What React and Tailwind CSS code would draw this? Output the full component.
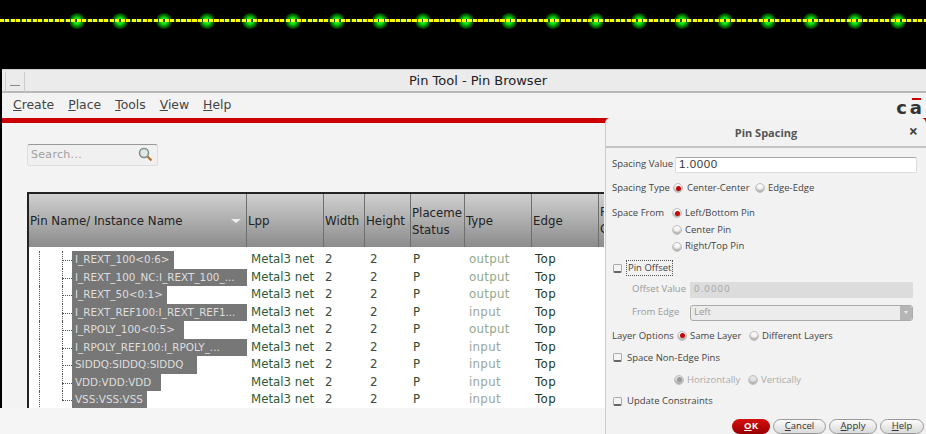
const dots = [77, 120, 164, 207, 250, 293, 337, 380, 423, 466, 509, 553, 596, 639, 682, 725, 768, 811, 855, 898];

const rows = [
  { name: "I_REXT_100<0:6>", type: "output", w: "w-[102px]" },
  { name: "I_REXT_100_NC:I_REXT_100_...", type: "output", w: "w-[175px]" },
  { name: "I_REXT_50<0:1>", type: "output", w: "w-[95px]" },
  { name: "I_REXT_REF100:I_REXT_REF1...", type: "input", w: "w-[175px]" },
  { name: "I_RPOLY_100<0:5>", type: "output", w: "w-[112px]" },
  { name: "I_RPOLY_REF100:I_RPOLY_...", type: "input", w: "w-[175px]" },
  { name: "SIDDQ:SIDDQ:SIDDQ", type: "input", w: "w-[125px]" },
  { name: "VDD:VDD:VDD", type: "input", w: "w-[89px]" },
  { name: "VSS:VSS:VSS", type: "input", w: "w-[75px]" },
];

const cols = "grid grid-cols-[218px_77px_41px_46px_54px_67px_67px_5px]";

function HeaderCell({ children, className = "" }) {
  return (
    <div className={"flex h-full items-center overflow-hidden whitespace-nowrap border-r border-[#6f6f6f] pl-[1px] pt-[2px] leading-[17px] " + className}>
      {children}
    </div>
  );
}

function Radio({ on, off }) {
  return (
    <span
      className={
        "flex h-[10px] w-[10px] shrink-0 items-center justify-center rounded-full border border-[#c0c0c0] shadow-[inset_0_-2px_2px_#aaa] " +
        (off ? "bg-[#e4e4e4]" : "bg-[#f8f8f8]")
      }
    >
      {on && <span className={"h-[5px] w-[5px] rounded-full " + (off ? "bg-[#999]" : "bg-[#c40000]")} />}
    </span>
  );
}

function Check() {
  return <span className="h-[9px] w-[9px] shrink-0 rounded-[2px] border border-[#aaa] border-b-2 border-b-[#666] bg-[#f4f4f4]" />;
}

function Btn({ children, className = "" }) {
  return (
    <button className={"flex h-[15px] items-center justify-center rounded-full border border-[#9a9a9a] bg-gradient-to-b from-[#fbfbfb] to-[#d9d9d9] text-[#333] " + className}>
      {children}
    </button>
  );
}

export default function App() {
  return (
    <div className="relative h-[434px] w-[926px] overflow-hidden bg-[#f5f5f5] font-['DejaVu_Sans',sans-serif]">
      {/* layout canvas behind the window */}
      <div className="relative h-[69px] bg-black">
        <div className="absolute bottom-0 left-[30px] right-0 top-[45px] bg-[radial-gradient(#262626_0.5px,transparent_0.6px)] bg-[size:4px_4px]" />
        {dots.map((x) => (
          <span
            key={x}
            style={{ left: x - 8 }}
            className="absolute top-[13px] h-[16px] w-[16px] rounded-full bg-[radial-gradient(circle,#33ff33_0,#11dd11_28%,#006600_55%,#002200_75%,transparent_90%)]"
          />
        ))}
        <div className="absolute left-0 right-0 top-[19px] h-[3px] bg-[repeating-linear-gradient(90deg,#ffff00_0,#ffff00_4px,#0d4f5c_4px,#0d4f5c_5.5px)]" />
      </div>

      {/* pin browser */}
      <div className="flex h-[339px] flex-col border-l-2 border-black bg-[#f3f3f3] bg-[radial-gradient(#dddddd_0.5px,transparent_0.6px)] bg-[size:2px_2px]">
        <div className="relative flex h-[24px] shrink-0 items-center justify-center border-b-2 border-[#b9b9b9] border-t border-t-[#ccc] bg-[#ebebeb] pl-[28px] pt-[1px] text-[13px] text-[#222]">
          <span className="absolute left-[3px] top-[2px] flex h-[20px] w-[20px] items-end justify-center border-x border-[#ccc] pb-[6px]">
            <span className="h-px w-[10px] bg-[#888]" />
          </span>
          <span>Pin Tool - Pin Browser</span>
        </div>

        <div className="relative flex h-[25px] shrink-0 items-center gap-[14px] pl-[11px] text-[12.4px] text-[#444]">
          <span><u>C</u>reate</span>
          <span><u>P</u>lace</span>
          <span><u>T</u>ools</span>
          <span><u>V</u>iew</span>
          <span><u>H</u>elp</span>
          <span className="absolute right-[1px] top-[3px] flex text-[18px] font-semibold leading-[24px] tracking-[3px] text-[#333]">
            c<span className="relative">a<span className="absolute left-[2px] right-[4px] top-[2px] h-[2px] bg-[#c00]" /></span>
          </span>
        </div>
        <div className="h-[5px] shrink-0 bg-[#cc0000]" />

        <div className="flex min-h-0 flex-1 flex-col pl-[25px] pr-[321px]">
          <div className="mt-[21px] flex h-[22px] w-[131px] shrink-0 items-center justify-between rounded-[3px] border border-[#ddd] border-t-[#999] bg-[#f0f0f0] pl-[3px] pr-[4px] pt-[1px] text-[11px] tracking-[0.3px] text-[#a0a0a0]">
            <span>Search...</span>
            <svg width="15" height="15" viewBox="0 0 15 15" className="-mt-[3px]">
              <circle cx="6" cy="6" r="4.5" fill="#dfe8e4" stroke="#7d8d88" strokeWidth="1.5" />
              <path d="M9.5 9.5 L13.5 13.5" stroke="#b5702a" strokeWidth="2.2" />
            </svg>
          </div>

          <div className="mt-[26px] flex min-h-0 flex-1 flex-col border-l-2 border-[#222]">
            <div className={cols + " h-[55px] w-[575px] shrink-0 items-center border-t-2 border-[#222] bg-gradient-to-b from-[#d0d0d0] to-[#8c8c8c] text-[11.8px] text-[#222]"}>
              <HeaderCell className="relative">
                <span>Pin Name/ Instance Name</span>
                <span className="absolute right-[5px] top-[25px] h-0 w-0 border-x-[5px] border-t-[4px] border-x-transparent border-t-[#eee]" />
              </HeaderCell>
              <HeaderCell>Lpp</HeaderCell>
              <HeaderCell>Width</HeaderCell>
              <HeaderCell>Height</HeaderCell>
              <HeaderCell>
                <span>Placeme<br />Status</span>
              </HeaderCell>
              <HeaderCell>Type</HeaderCell>
              <HeaderCell>Edge</HeaderCell>
              <div className="flex h-full items-center overflow-hidden pl-[1px] leading-[17px]">
                <span>F<br />C</span>
              </div>
            </div>

            <div className="min-h-0 flex-1 overflow-hidden bg-white pt-[4px] text-[11.8px] leading-[17px]">
              {rows.map((row, i) => (
                <div key={row.name} className={cols + " h-[17.5px] items-center"}>
                  <div className="relative h-full pl-[43px]">
                    <span className="absolute bottom-0 left-[10px] top-0 border-l border-dotted border-[#555]" />
                    <span className={"absolute left-[33px] top-0 border-l border-dotted border-[#555] " + (i === rows.length - 1 ? "h-[9px]" : "h-full")} />
                    <span className="absolute left-[33px] top-[9px] w-[10px] border-t border-dotted border-[#555]" />
                    <span className={"flex h-full items-center overflow-hidden whitespace-nowrap bg-[#777] pl-[3px] text-[10.4px] text-[#dedede] " + row.w}>
                      {row.name}
                    </span>
                  </div>
                  <div className="whitespace-nowrap pl-[4px] text-[#2f5a35]">Metal3 net</div>
                  <div className="pl-[1px] text-[#3e4a3e]">2</div>
                  <div className="pl-[5px] text-[#3e4a3e]">2</div>
                  <div className="pl-[2px] text-[#2f4a30]">P</div>
                  <div className={"pl-[4px] tracking-[0.3px] " + (row.type === "input" ? "text-[#9aa59a]" : "text-[#8fa98b]")}>
                    {row.type}
                  </div>
                  <div className="pl-[3px] font-medium tracking-[0.4px] text-[#243a24]">Top</div>
                  <div />
                </div>
              ))}
            </div>
          </div>
        </div>
      </div>
      <div className="h-[26px] bg-[#f5f5f5]" />

      {/* pin spacing dialog */}
      <div className="absolute left-[605px] top-[118px] flex h-[316px] w-[321px] flex-col whitespace-nowrap rounded-t-[5px] border-l border-[#ccc] bg-[#f2f2f2] font-['Open_Sans',sans-serif] text-[9.5px] text-[#444]">
        <div className="relative flex h-[30px] shrink-0 items-center justify-center border-b-2 border-[#c4c4c4] pt-[2px] text-[11px] font-bold text-[#555]">
          Pin Spacing
          <span className="absolute right-[8px] top-[6px] text-[16px] font-bold leading-[15px] text-[#444]">×</span>
        </div>

        <div className="mt-[9px] flex h-[15px] items-center pl-[6px]">
          <span className="w-[63px]">Spacing Value</span>
          <div className="flex h-[16px] w-[242px] items-center rounded-[2px] border border-[#ddd] border-t-[#aaa] bg-white pl-[3px] font-['Liberation_Sans',sans-serif] text-[11.5px] tracking-[0.6px] text-[#333]">
            1.0000
          </div>
        </div>

        <div className="mt-[9px] flex h-[15px] items-center pl-[6px]">
          <span className="w-[61px]">Spacing Type</span>
          <Radio on />
          <span className="ml-[4px] w-[68px]">Center-Center</span>
          <Radio />
          <span className="ml-[3px]">Edge-Edge</span>
        </div>

        <div className="mt-[10px] flex h-[15px] items-center pl-[6px]">
          <span className="w-[60px]">Space From</span>
          <Radio on />
          <span className="ml-[3px]">Left/Bottom Pin</span>
        </div>
        <div className="mt-[1px] flex h-[16px] items-center pl-[66px]">
          <Radio />
          <span className="ml-[3px]">Center Pin</span>
        </div>
        <div className="mt-[1px] flex h-[16px] items-center pl-[66px]">
          <Radio />
          <span className="ml-[3px]">Right/Top Pin</span>
        </div>

        <div className="mt-[6px] flex h-[15px] items-center pl-[7px]">
          <Check />
          <span className="ml-[4px] border border-dotted border-[#555] px-[1px]">Pin Offset</span>
        </div>

        <div className="mt-[6px] flex h-[16px] items-center pl-[26px] text-[#999]">
          <span className="w-[58px]">Offset Value</span>
          <div className="flex h-[16px] w-[223px] items-center border border-[#ddd] bg-[#dcdcdc] pl-[3px] tracking-[1.2px] text-[#a5a5a5]">0.0000</div>
        </div>
        <div className="mt-[7px] flex h-[16px] items-center pl-[26px] text-[#999]">
          <span className="w-[58px]">From Edge</span>
          <div className="flex h-[16px] w-[223px] items-center justify-between rounded-[3px] border border-[#aaa] bg-[#ececec] pl-[3px]">
            Left
            <span className="flex h-full w-[12px] items-center justify-center rounded-r-[3px] bg-[#b5b5b5]">
              <span className="h-0 w-0 border-x-[2px] border-t-[3px] border-x-transparent border-t-[#eee]" />
            </span>
          </div>
        </div>

        <div className="mt-[8px] flex h-[15px] items-center pl-[6px]">
          <span className="w-[65px]">Layer Options</span>
          <Radio on />
          <span className="ml-[3px] w-[59px]">Same Layer</span>
          <Radio />
          <span className="ml-[3px]">Different Layers</span>
        </div>

        <div className="mt-[7px] flex h-[15px] items-center pl-[7px]">
          <Check />
          <span className="ml-[5px]">Space Non-Edge Pins</span>
        </div>

        <div className="mt-[7px] flex h-[15px] items-center pl-[68px] text-[#aaa]">
          <Radio on off />
          <span className="ml-[3px] w-[61px]">Horizontally</span>
          <Radio off />
          <span className="ml-[3px]">Vertically</span>
        </div>

        <div className="mt-[7px] flex h-[15px] items-center pl-[7px]">
          <Check />
          <span className="ml-[5px]">Update Constraints</span>
        </div>

        <div className="mt-[10px] flex justify-end gap-[3px] pr-[2px]">
          <button className="flex h-[15px] w-[38px] items-center justify-center rounded-full bg-gradient-to-b from-[#d81010] to-[#980000] font-bold text-white">
            <u>O</u>K
          </button>
          <Btn className="w-[53px]"><span><u>C</u>ancel</span></Btn>
          <Btn className="w-[48px]"><span><u>A</u>pply</span></Btn>
          <Btn className="w-[44px]"><span><u>H</u>elp</span></Btn>
        </div>
      </div>
    </div>
  );
}
